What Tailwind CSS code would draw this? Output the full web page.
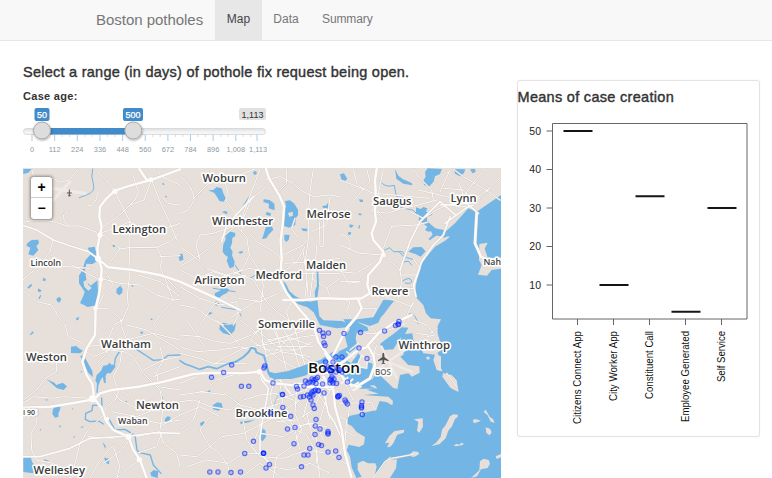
<!DOCTYPE html>
<html lang="en">
<head>
<meta charset="utf-8">
<title>Boston potholes</title>
<script src="https://cdn.jsdelivr.net/npm/@tailwindcss/browser@4"></script>
</head>
<body class="h-[478px] w-[772px] overflow-hidden bg-white font-['Liberation_Sans',Arial,sans-serif] text-[#333]">
<nav class="flex h-[41px] border-b border-[#e7e7e7] bg-[#f8f8f8] pl-24 text-[12px] leading-[39px] text-[#777]">
  <span class="w-[119px] whitespace-nowrap text-[15px] tracking-[-0.03px]">Boston potholes</span>
  <span class="w-[47px] bg-[#e7e7e7] text-center text-[#444]">Map</span>
  <span class="w-[48px] text-center">Data</span>
  <span class="ml-3 tracking-[-0.1px]">Summary</span>
</nav>
<main class="flex pl-[23px]">
  <section class="w-[478px]">
    <h4 class="mt-[23px] h-[16px] whitespace-nowrap text-[14.500px] leading-4 tracking-[0.25px] [-webkit-text-stroke:0.4px]">Select a range (in days) of pothole fix request being open.</h4>
    <p class="mt-[9px] h-[14px] text-[11px] font-bold leading-[14px] tracking-[0.3px]">Case age:</p>
    <svg class="block h-[65px] w-[260px]" viewBox="23 103 260 65" font-family="Liberation Sans, Arial, sans-serif">
      <defs>
        <linearGradient id="track" x2="0" y2="1"><stop stop-color="#dedede"/><stop offset=".6" stop-color="#f5f5f5"/></linearGradient>
        <filter id="knob" x="-50%" y="-50%" width="200%" height="200%"><feDropShadow dx=".5" dy="1" stdDeviation=".8" flood-opacity=".35"/></filter>
      </defs>
      <g id="ticks"></g>
      <rect x="23.5" y="128.500" width="242" height="6" rx="3" fill="url(#track)" stroke="#d0d0d0" stroke-width=".7"/>
      <rect x="42" y="128" width="91" height="6.500" fill="#428bca"/>
      <rect x="34.500" y="108" width="15" height="13" rx="2" fill="#428bca"/>
      <rect x="123" y="108" width="20" height="13" rx="2" fill="#428bca"/>
      <rect x="239" y="108" width="27" height="12" rx="2" fill="#e1e1e1"/>
      <g font-size="9" text-anchor="middle">
        <text x="42" y="117.500" fill="#fff" stroke="#fff" stroke-width=".25">50</text>
        <text x="133" y="117.500" fill="#fff" stroke="#fff" stroke-width=".25">500</text>
        <text x="252.500" y="117.500" fill="#333">1,113</text>
      </g>
      <g fill="#ddd" stroke="#aaa" filter="url(#knob)"><circle cx="42" cy="130.500" r="8.500"/><circle cx="133.300" cy="130.500" r="8.500"/></g>
    </svg>
    <div class="relative h-[310px] w-[478px] overflow-hidden">
      <svg class="block h-[310px] w-[478px]" viewBox="23 168 478 310">
        <rect x="23" y="168" width="478" height="310" fill="#e7dfd9"/>
        <g transform="translate(20 165) scale(.33333)" stroke-linejoin="round" stroke-linecap="round">
          <!-- lakes, ponds and rivers -->
          <g fill="#73b6e6">
            <path d="M22 235L35 225 55 224 57 235 49 244 55 255 40 272 25 268 31 248 19 242ZM10 12L35 12 25 23 10 27ZM203 248L224 245 230 270 238 284 218 297 199 296 195 315 200 350 212 362 232 346 235 390 232 420 203 426 180 414 190 393 194 380 177 355 177 332 187 315 196 286 212 268ZM290 371L301 362 308 372 306 385 297 391 289 383ZM109 401l10-6 5 8-6 10-7-4ZM70 338l8 4-2 6-8-1ZM22 367l12-11 2 6-10 9ZM278 240l7-1 1 6-7 1ZM55 370l10 7-5 5-7-3ZM168 460l10-5-3 10-6 1ZM55 400l6-10 3 1-5 12ZM427 54l5 1 1 5-5-1ZM434 94l7-2-2 6ZM335 358l5 1-1 7-4-2ZM393 460l5 2-2 4-4-2ZM475 272l12-7 2 16-10 7Z"/>
            <g transform="translate(480 0)">
              <path d="M85 76L100 75 110 66 125 70 130 85 137 100 131 110 118 108 110 94 103 84ZM315 108L330 106 343 116 354 134 354 151 347 160 346 180 327 188 310 182 305 168 316 151 309 134 318 124ZM251 103L269 105 283 116 284 136 266 130 267 116 250 111ZM260 141l13 4-2 8-14-4ZM257 187L275 183 280 194 267 208 259 220 246 222 252 205ZM147 199L165 203 166 213 157 219 156 235 151 248 158 260 156 271 164 290 161 306 149 310 140 287 144 276 134 269 128 260 130 237 137 224 136 212ZM313 209l16 1-3 15-8 6-5-8ZM104 385L120 377 125 367 147 372 142 383 128 390 117 399 106 396ZM105 411l10-3 3 10-8 4-7-3ZM83 444l8-3 7 4-12 5ZM0 266l9 7 1 11-10 4ZM175 261l12-3 2 5-9 3ZM219 20l10-1 1 8-8 3ZM427 123l13-2 2-6 4 1 2 14-17 1ZM363 190l19 1-1 8-12-1ZM126 141l9-3 8 3-3 7ZM120 477l11-4 17 5Z"/>
              <path d="M120 12L145 15 168 10 164 31 151 46 129 39 118 28ZM98 256l14-9 13 3 3 13-13 9-16-4ZM62 317l-2-7 10-6 6 4-6 12ZM238 340l8-12 10 2 2 20-10 14-9-6Z" transform="translate(0 465)"/>
              <path d="M180 305l45-5-18 7-25 5ZM82 213l9-2 0 7-7 1ZM267 170l9-2-3 6Z" transform="translate(0 465)"/>
            </g>
            <g transform="translate(960 0)">
              <path d="M0 28L12 25 22 42 14 48 5 45ZM165 12L175 32 188 42 215 54 217 61 190 56 169 41ZM251 45L257 35 255 22 263 10 306 12 300 27 285 34 281 50 267 65 252 60ZM342 12L376 13 372 24 360 34 345 26ZM390 13l15-2 2 10-10 4ZM228 127L242 132 250 126 262 130 258 141 280 140 275 150 261 155 261 169 286 190 315 196 333 205 315 218 290 211 269 226 260 216 267 202 255 195 262 185 236 165 238 151 228 143ZM220 247L245 246 257 259 242 275 226 267 205 260ZM132 404L163 407 155 416 145 429 132 447 117 462 128 420ZM57 103l12 1 0 7-9 0ZM55 145l10 1-1 5-8-1ZM29 178l12 3-6 7-7-2ZM24 202l9-1 0 7-8 3ZM57 180l3 1-1 10-4-2Z"/>
            </g>
            <g transform="translate(0 465)">
              <path d="M80 178L103 188 109 195 128 188 141 199 131 210 111 205ZM153 80l16-2 6 6 14 8-9 8-27-1ZM181 109l9-5 10 18 17 31 2 18-14-12-16-32ZM230 165L243 153 250 137 261 136 269 128 275 135 285 132 286 141 272 160 261 160 257 168 257 190 252 188 248 170 240 184 235 198 233 218 229 218 231 190 226 182ZM99 267l10-8 13 0-3 13-4 8 1 10-11 3-8-11ZM10 413l22-4 4 17 12 14-8 20-30-4ZM252 413l16 3-1 17-9-4ZM435 296l8-7 9 2-5 17-13-3ZM30 43l8-9 3 4-9 8ZM72 418l18 6-17-1ZM247 366l10 11-1 10ZM391 458l10-8 14 4-2 20-19-5ZM361 37l6-3 3 5-7 4ZM423 231l6-1 1 7-6 0ZM315 244l6-2-1 8Z"/>
              <path d="M75 240l8-3-2 5ZM60 326l4 3-3 3ZM118 315l6 4-5 4ZM181 321l11-2-6 5ZM159 353l6-7-2 8ZM181 155l6-3-3 6ZM156 266l5-2-4 6Z"/>
            </g>
            <path transform="translate(960 465)" d="M483-375L410-325 385-335 345-290 315-264 290-260 275-255 330-250 315-238 285-220 260-190 242-165 232-135 226-90 228-68 250-45 258-20 272-5 303-2 293 18 293 40 303 75 303 90 292 100 300 110 298 133 310 160 335 165 350 181 356 216 343 210 331 203 307 170 310 155 290 150 280 120 285 104 250 100 240 80 220 60 217 40 195 42 205 23 185 22 163 40 135 60 120 72 130 90 160 88 184 50 178 80 192 103 181 110 205 135 238 139 239 158 216 170 205 160 180 165 172 207 159 203 108 154 100 174 81 197 103 196 112 205 80 209 116 221 70 225 145 230 159 243 157 256 139 246 119 243 109 270 24 289 23 311 36 319 50 336 75 351 72 373 58 381 26 374 20 390 30 410 35 442 49 474 65 470 53 450 53 430 69 422 84 430 106 430 110 440 105 462 119 450 133 425 151 409 154 420 171 418 168 445 150 474 483 474Z"/>
          </g>
          <!-- streams -->
          <g fill="none" stroke="#73b6e6" stroke-width="5">
            <path d="M218 12Q212 35 220 57T200 90L178 98" stroke-width="3"/>
            <path transform="translate(480 465)" d="M305 206L290 235 270 285M248 324l6 30" stroke-width="2"/>
            <path transform="translate(0 465)" d="M300 92L286 115 284 130M350 88L380 108 400 121 427 119 444 106 480 105M245 234L246 255 218 256 216 272 197 280 196 298 210 305 236 303 250 312M269 300L284 329 315 328 345 346 351 390 358 398 391 405 400 435 423 460" stroke-width="4"/>
            <g transform="translate(960 0)" stroke-width="3"><path d="M119 48Q136 70 163 61L169 94 190 100 182 128 218 135 246 160M130 257L149 248 160 260 187 260 200 278 222 284M179 263L196 278 190 292 205 288 215 300M184 350Q210 333 214 346T196 354M200 450Q215 440 225 455T235 475"/></g>
            <path d="M645 300L665 330M690 340l30-18M605 427l50 8 8 18M580 370l65 10M670 122l18-28" stroke-width="3"/>
          </g>
          <g fill="#e7dfd9">
            <path d="M190 350l10-6 5 15 10 10-10 8-12-12ZM804 144l14-4 1 12-11 3ZM1219 201l14-2 5 10-12 13-10-6Z"/>
            <!-- harbor islands -->
            <path transform="translate(960 465)" d="M222 298L248 295 249 320 238 338 231 332 235 306ZM135 370L148 348 164 333 193 329 191 338 172 344 160 370 151 380 141 382 148 368ZM274 379L288 368 302 351 306 329 317 315 330 289 340 283 354 284 353 291 345 297 336 319 325 332 317 355 299 372ZM341 377l8-6 7 3 10-6 6 4-7 4-17 3ZM398 300l9-3 16 5-11 5-10 3ZM431 276l6-7 12 21 10 7 5 11-12-3-9-19ZM437 322l13 4 5 11-6 9-10-7ZM420 424L431 416 446 420 450 431 443 444 423 448 411 469 393 474 418 451ZM467 409l16-7 0 10-13 5ZM210 402l10-8 15 2 2 7-15 8-10-2ZM258 110l10 0 2 7-9 2ZM418-228L443-232 434-214 444-185 483-188 483-154 455-150 441-133 414-136 425-165 417-180Z"/>
            <path d="M1110 885l62-15" fill="none" stroke="#e7dfd9" stroke-width="2"/>
          </g>
          <defs>
            <g id="minor">
              <path d="M9 172L40 166 70 166 110 172 140 183 180 183 230 202M40 12Q30 40 60 44T100 40L120 52 150 44 173 12M143 142Q123 145 133 167L144 184M240 205L280 191 330 170 390 205 480 175M232 22L260 45 285 80 305 120 330 170 327 225 330 310M340 35L355 80 345 105 330 120M395 45L420 110 450 175 470 225M242 190L300 150 330 120 372 105 393 48M410 15L425 35 480 60M330 248L410 247 450 230 480 205M243 205L300 250 272 290 255 310M327 248L298 252M410 247L427 280 420 310 432 332M420 275L480 272M432 332L450 380 460 405 420 450 400 480M432 332L480 382M330 320L322 390 325 425 305 470M240 340L300 355 360 360 410 390 460 405 480 403M100 222L90 260 60 300 9 345M9 375L50 410 95 420 115 455 135 480M80 300L210 310 240 340M155 300L240 345M230 430L265 430 300 460 305 480M262 330L280 360 250 390 232 430M355 330L420 350 480 395M235 80Q230 110 215 120L202 122M480 120Q430 118 430 100"/>
              <g transform="translate(480 0)"><path d="M0 32Q40 60 42 105L25 135 0 145M42 100L80 60 110 45 165 35 225 12M130 35L142 75 140 110 170 150 175 190 200 215 208 270 190 310 160 330M240 12L215 80 190 145 187 170M255 70L215 100 190 160 185 200M258 45L300 35 340 55 360 75 400 95 450 90 480 95M320 12L320 55 290 85M400 12L390 80 385 150 385 220 375 300M450 95L440 180 395 200M0 245L50 280 80 310 140 330 210 310 300 330 360 325M60 285L48 240 60 210 100 205 160 185M165 185L110 230 60 270 0 305M210 205L230 230 280 260 300 275M300 275L370 240 380 225M355 220L335 190 345 160M375 245L350 290 310 320M360 325L480 325M315 295L400 290 480 280M0 315L50 340 100 320 160 340 200 330M160 320L220 345 260 410 290 440 330 470M300 340L240 400 180 440 150 460M175 400L240 410 295 385 320 365M210 270L240 320 250 360 240 440M0 365L60 400 120 420 170 410 175 450 160 480M60 480L100 420 140 395M0 420L50 430 90 460 130 480M340 400L320 440 330 480M370 260L380 335 385 405M410 240L405 320M400 315L390 400M480 340L440 370 395 340M440 370L455 405M418 170L420 245 430 245 430 165M380 350L375 400"/></g>
              <g transform="translate(960 0)"><path d="M0 45L40 60 70 72 100 85 160 90 270 100M68 72L90 50 80 12M40 12L50 55 70 72M70 72L30 120 0 160M95 140L110 110 130 12M110 140L140 145 190 130 235 120 290 105M110 140L155 184 230 180 262 172M155 184L130 250M0 240L60 265 130 270M0 210Q20 205 30 230L30 255M0 320L50 325 90 300 130 270M0 350L60 350 90 380M90 320L60 350 25 355 0 310M210 140L250 160 290 135 320 120 380 125M220 12L240 40 275 75 280 105M235 75L320 95 360 110M310 70L370 75 390 95 420 100 450 70M290 50L320 20 355 50 370 90M340 12L370 35 430 70 480 105M300 80L330 15M370 95L410 40 440 12M395 110L440 75 480 40M140 280L180 315 185 350 175 400M180 370L220 370 240 310 220 280M185 330L230 330M100 385L150 400 215 425 220 415M60 430L110 430 90 465M0 400L30 410 20 440 40 470M220 410L190 475"/></g>
              <g transform="translate(0 465)"><path d="M9 120L95 130 145 125M135 15L145 50 180 65 200 80 280 70M110 130L110 155 75 175 50 210 10 240M9 250L40 230 100 235 130 230 210 235M52 265L50 310 33 340 35 390 50 420 100 430 150 474M160 450L180 370 205 330 245 290M205 350L280 355M280 20L260 70 260 100 230 130M280 15L310 0M200 95L220 110 270 90 310 95M305 20L320 60 400 40 480 60M320 15L380 30 430 60 480 90M305 95L300 130 280 170 290 200 340 240 360 270M310 95L340 110 370 160 420 210 430 260 420 330M360 270L300 240 275 210M370 150L430 120 480 110M400 170L480 140M420 80L430 120 410 155 415 200 480 210M275 275L350 290 400 270M245 290L260 260 285 240 300 205M325 350L370 300 420 310 480 300M350 350L420 335 430 370 470 400 480 440M330 355L310 385 280 410 250 430M280 380L300 440 290 474M280 375L240 420 210 474M360 420L330 440 290 474M350 400L410 380 425 340M150 474L185 455M420 320L480 285"/></g>
              <g transform="translate(480 465)"><path d="M0 45L60 50 110 65 150 70 215 45 250 20M0 80L50 95 120 90 180 80 210 90M0 100L60 115 100 130 200 130M0 190L50 170 90 140 140 110 190 85 215 80M0 225L70 215 110 180 160 165 240 150M60 215L140 225 180 255 240 270 300 250M0 245L40 240 90 260 150 270 190 240 240 225 290 220M60 240L40 300 0 330M20 0L60 60 75 80M110 0L150 40 180 75M180 0L220 30 250 70 260 110M240 0L250 80 300 120 350 145M270 0L290 50 350 100 400 130M230 30L290 80 400 80M210 80L280 70 370 50 410 45M250 70L380 30 400 0M300 10L340 80 360 145M340 10L370 120 380 150M250 110L300 95 390 110M285 20L320 150M260 60L320 50 390 75M280 100L350 30M235 30L210 60 260 90 350 90 400 65M0 285L60 260 120 290M90 290L60 330 90 380 120 400 145 440 150 474M90 380L50 410 0 405M90 380L125 350 190 340 240 315 285 290M190 305L200 360 230 400M240 260L240 320 215 380 240 410M280 190L270 230 285 285 330 320 380 345 410 400 420 474M300 190L310 260 345 330 360 390M380 210L360 240 300 280M285 220L340 240 380 280 400 360M290 240L350 220 400 200M320 210L400 290 430 360 470 400M350 205L345 280 365 330 335 380 290 410 280 474M390 215L370 290 410 340 410 430M430 200L400 270 350 300 290 305M240 340L310 350 380 310 440 320M240 410L310 415 380 390 440 400 480 420M340 320L400 310 450 345M270 440L330 450 390 430 450 460M20 440L80 420 145 430 190 400 240 400M180 474L240 430 310 474M410 215L440 260 450 300M460 190L440 230 420 300M400 160L480 220M420 130L440 200M450 120L455 200M395 185L480 170"/></g>
            </g>
            <g id="local">
              <path transform="translate(960 465)" d="M30 0L80 40 110 40M90 60L110 75 95 120M100 100L120 104M80 0L110 40M120 40L200 10M220 0L260 15 280 40M230 40L265 45 290 25M260 50L285 45M300 110L300 150M20 200L40 240M0 250L95 248 105 270M30 245L25 290M65 245L65 285M0 290L20 300 15 370 0 400M0 350L20 335 45 350M0 420L30 440M100 474L135 425 155 415 220 403M320 160L350 200"/>
            </g>
            <g id="major">
              <path d="M0 178L50 195 100 225 150 242 205 260 230 278M240 210L230 280M700 95L620 180 605 230"/>
              <path transform="translate(960 0)" d="M345 148L300 110 240 170 210 230 180 315M300 120L380 115 415 145M315 175L380 128 400 120M330 155L310 210 280 240 245 290 220 360 228 395"/>
              <path transform="translate(0 465)" d="M9 410L60 410 150 385 210 355 330 348 410 338 480 340"/>
              <path transform="translate(480 465)" d="M240 150L245 180 265 205 260 240 250 285 240 350 240 400 270 430M300 180L330 220M430 210L445 280 465 310 480 345M340 190L410 190 450 210"/>
            </g>
            <g id="highway">
              <path d="M358 12L380 45 398 43 480 13M393 45L330 62 285 77 260 100 240 125 238 155 245 185 240 210 232 250 235 280 245 310 243 345 237 390 227 430 225 510 200 550 187 590 200 630 217 657 222 698M233 280L265 307 340 315 420 330 480 350 600 405 660 435"/>
              <path transform="translate(480 0)" d="M258 12L267 40 300 95 312 125 308 180 302 225 305 280 300 345 320 385 360 435 400 480 415 530 455 585"/>
              <path transform="translate(960 0)" d="M110 12L105 45 107 80 105 140 108 170 95 205 100 225 130 260 120 290 85 330 82 360 90 385 55 405 65 430 50 455 20 490 0 530 -20 570M-170 405L-110 405 -50 400 20 402 65 400M410 145L405 235 423 275 450 290"/>
              <path transform="translate(0 465)" d="M9 263L90 260 165 248 222 238 240 220 275 210 355 200 430 185 520 162 570 158 670 160 720 155 735 180 760 190 860 200 940 200M222 235L245 265 260 305 280 330 325 350 340 390 360 420 380 474"/>
              <path transform="translate(960 465)" d="M-45 100L-25 130 0 160 20 190 50 200 90 175 105 135 100 105 85 80 55 90 10 125 -20 145M80 80L115 40 160 10 215-15M-50 170L-20 210 -15 260 5 330 15 400 35 474"/>
            </g>
          </defs>
          <g fill="none">
            <path d="M100 105L150 50M95 70L195 85" stroke="#eeeae5" stroke-width="10"/>
            <g stroke="#d2cac4"><use href="#minor" stroke-width="5"/><use href="#local" stroke-width="5"/><use href="#major" stroke-width="7"/></g>
            <g stroke="#fcfbfa"><use href="#minor" stroke-width="3"/><use href="#local" stroke-width="3"/><use href="#major" stroke-width="5"/></g>
          </g>
          <!-- mystic river, charles basin and inner harbor -->
          <g fill="#73b6e6">
            <path transform="translate(480 0)" d="M310 348L318 356 328 378 345 393 368 404 390 410 406 407 404 380 411 362 410 320 415 320 417 362 412 400 415 430 418 453 430 466 485 468 510 476 510 486 470 490 420 480 401 442 382 427 355 418 337 402 318 375Z"/>
            <path transform="translate(705 435)" d="M265 28L290 28 338 52 340 62 305 68 302 85 306 105 300 116 280 132 274 150 288 160 310 130 330 155 352 160 356 190 345 228 365 236 310 236 282 212 258 190 246 165 240 140 252 124 278 111 270 80 285 56ZM35 183L60 190 100 183 150 165 196 150 236 124 246 133 230 150 195 172 150 197 110 207 60 207 44 200ZM290 30L355 22 385-30 407-28 380 15 370 38 345 48Z"/>
            <g fill="none" stroke="#73b6e6"><path d="M480 587L495 597 515 604 538 613 565 605 590 611 622 597 648 590" stroke-width="5"/><path d="M648 590L670 576 686 561 693 548 706 552 709 562 732 572 739 598 747 628 765 642" stroke-width="6"/></g>
          </g>
          <path d="M1025 570L1042 591 1040 610 1010 604ZM980 560L1001 577M990 555L1015 535" fill="#e7dfd9" stroke="#f7f4f1" stroke-width="4"/>
          <g fill="none"><use href="#highway" stroke="#d7d0ca" stroke-width="9.500"/><use href="#highway" stroke="#fdfcfb" stroke-width="7.500"/></g>
          <g fill="#fdfcfb"><circle cx="285" cy="79" r="8"/><circle cx="240" cy="210" r="8"/><circle cx="234" cy="281" r="9"/><circle cx="243" cy="343" r="7"/><circle cx="227" cy="430" r="7"/><circle cx="218" cy="701" r="11"/><circle cx="260" cy="763" r="7"/><circle cx="325" cy="815" r="9"/><circle cx="358" cy="884" r="8"/><circle cx="718" cy="620" r="8"/><circle cx="1090" cy="270" r="7"/><circle cx="393" cy="44" r="7"/></g>
          <path d="M885 655L950 640M890 675L935 645M965 655l18-17M980 660l18-17M995 665l20-12M1000 675l23-10" stroke="#f7f4f1" stroke-width="6"/>
          <path transform="translate(960 465)" d="M125 80L170 175M115 145L210 80M130 120L215 155" stroke="#f0ebe7" stroke-width="7"/>
          <path d="M148 75v18m-6-9h12m-8 8h5" fill="none" stroke="#555" stroke-width="3"/>
          <path transform="translate(1090 580)" d="M0-17Q3-17 3-10V-4L16 6V9L3 5 2 13 6 16V18L0 16-6 18V16L-2 13-3 5-16 9V6L-3-4V-10Q-3-17 0-17Z" fill="#555"/>
          <path d="M9 730H54V753H9Z" fill="#fff" stroke="#bbb" stroke-width="2"/>
        </g>
        <g id="labels" font-family="Open Sans, Noto Sans, sans-serif" font-weight="600" stroke="#fff" stroke-width="3.200" stroke-linejoin="round" paint-order="stroke"></g>
        <g id="cases" fill="#0033ff" fill-opacity=".2" stroke="#0022ff" stroke-opacity=".58" stroke-width="1.100"></g>
      </svg>
      <div class="absolute left-2 top-[9px] h-[42px] w-[21px] rounded-[3px] bg-white text-center text-[14px] font-bold leading-5 text-black shadow-[0_0_3px_1px_rgba(0,0,0,0.4)]">
        <div class="h-[21px] border-b border-[#ccc]">+</div>
        <div class="h-[21px]">−</div>
      </div>
    </div>
  </section>
  <aside class="ml-[15.500px] mt-[38.500px] h-[357px] w-[243px] rounded-[3px] border border-[#e3e3e3] shadow-[0_0_1px_#ddd]">
    <h4 class="mt-[8px] h-4 whitespace-nowrap text-[14.500px] leading-4 tracking-[0.3px] [-webkit-text-stroke:0.4px]">Means of case creation</h4>
    <svg class="mt-px block h-[325px] w-[241px]" viewBox="518 106 241 325" font-family="Liberation Sans, Arial, sans-serif" font-size="10.500" fill="#222">
      <path d="M552.500 123.500H747V319H552.500ZM546.500 131h6M546.500 169.500h6M546.500 208h6M546.500 246.500h6M546.500 285h6M577.500 319v6M613.500 319v6M649.500 319v6M685.500 319v6M721.500 319v6" fill="none" stroke="#555" stroke-width=".9"/>
      <path d="M563.500 131h29M599.500 285h29M635.500 196.300h29M671.500 311.800h29M707.500 208h29" stroke="#151515" stroke-width="1.900"/>
      <g text-anchor="end"><text x="541" y="134.800">50</text><text x="541" y="173.300">40</text><text x="541" y="211.800">30</text><text x="541" y="250.300">20</text><text x="541" y="288.800">10</text></g>
      <g id="categories" fill="#111" font-size="10"></g>
    </svg>
  </aside>
</main>
<script>
const NS = 'http://www.w3.org/2000/svg';
function add(parent, tag, attrs, text) {
  const el = document.createElementNS(NS, tag);
  for (const k in attrs) el.setAttribute(k, attrs[k]);
  if (text) el.textContent = text;
  document.getElementById(parent).appendChild(el);
}
// slider scale
[0,112,224,336,448,560,672,784,896,1008,1113].forEach((v, i) => {
  const x = 32 + v * 0.2022;
  add('ticks', 'path', {d: `M${x} 134v7`, stroke: '#a9cdea', 'stroke-width': 1});
  add('ticks', 'text', {x: x + (i === 10 ? 1 : 0), y: 152, 'text-anchor': 'middle', 'font-size': 7.4, fill: '#8b9ba5'}, v.toLocaleString('en-US'));
  if (i < 10) [1, 2].forEach(n => add('ticks', 'path', {d: `M${x + n * 7.5} 134v3`, stroke: '#d2d2d2', 'stroke-width': .8}));
});
// name, left, baseline, width, font size
[['Woburn',202.5,182,43.5,11.3],['Saugus',373,205,38.5,11.3],['Lynn',450.5,202,26,11.3],['Winchester',212,225,61,11.3],['Melrose',306.5,218,44,11.3],['Lexington',112.5,233,53.5,11.3],
['Lincoln',30.5,266,30.5,8.5],['Nah',483.5,265,17.5,8.5],['Malden',306,268.5,40,11.3],['Medford',255.5,279,46.5,11.3],['Arlington',194.5,284,50,11.3],['Revere',371.5,294.5,37,11.3],['Somerville',258,328,57,11.3],
['Winthrop',398.5,348.5,51.5,11.3],['Waltham',101,347.5,50,11.3],['Weston',26,361,41,11.3],['Boston',308,372.5,52,15],['BOS',375,374.5,16,8],['Newton',136,408.5,43,11.3],['Waban',118,424,29.5,8.5],['Brookline',235.5,417,52,11.3],['Wellesley',33.5,473.5,51.5,11.3],['I 90',23,415,12,7.5]]
.forEach(([t, x, y, w, s]) => add('labels', 'text', {x, y, textLength: w, lengthAdjust: 'spacingAndGlyphs', 'font-size': s, fill: t === 'Boston' ? '#111' : t === 'BOS' ? '#666' : '#3c3c3c'}, t));
// open cases: x, y
[[211.5,377.3],[223.6,372.4],[231.7,365],[241.4,386.3],[248.8,386.3],[264,368],[264.8,366],[273,383],[282.5,394.6],[282.5,394.6],[282.8,407.5],[270.5,413],[290.7,416.3],[287.5,429],[295,427.5],[253.5,441.3],[244.7,453.4],[263.5,453.3],[263.5,453.3],[263.5,453.3],[269.5,464.6],[266,468],[209.8,472],[218,472],[231,472.6],[240.5,472],[301.5,466.8],[294,443.7],[304,455],[308,455],[309.7,448.5],[318.5,444.5],[321.5,445.6],[328,431.5],[328,434],[328,433],[320,429],[315.3,426],[316,419.5],[315,434.5],[314.3,408.4],[313,405],[311,400],[307.5,395],[303.5,396.5],[300.5,397],[309.5,397],[312,392],[314,391],[315.5,390],[318,391],[318.5,390.5],[311,394],[313,395],[324,393],[297.5,389],[296.5,386.5],[304,386],[305.5,381],[308,383],[310,382],[313,382],[314,380],[316,379],[317.5,377.5],[316,383.5],[312,379],[322.6,384],[330,383],[332,381],[334,379],[331,379],[333,383],[336.5,383.5],[330,380],[332,377],[328,452],[335.7,451],[339,457.5],[319.5,330.3],[323,333],[323.5,336.5],[328.5,333],[324,343],[325,345.5],[325.5,362],[333,362],[336,357],[342,357],[326,369],[328,367],[330,370],[333,368],[336,372],[331,372],[340,370],[342,372],[338,369],[347.5,382],[344,333.5],[360.5,332.5],[359,348],[367,358.5],[384.6,331],[395.5,325.5],[398,324],[399,321.5],[398.5,324.5],[338,396.5],[338,397],[338,396],[339.5,395.5],[345,400],[346,402],[347.5,404],[362,402],[361.5,405.5],[361.5,408],[361.5,407],[362.3,414.5]]
.forEach(([cx, cy]) => add('cases', 'circle', {cx, cy, r: 2.2}));
['Citizens Connect App','City Worker App','Constituent Call','Employee Generated','Self Service'].forEach((t, i) =>
  add('categories', 'text', {transform: `translate(${581 + i * 36} 331) rotate(-90)`, 'text-anchor': 'end', textLength: [93,70,68,91,51][i], lengthAdjust: 'spacingAndGlyphs'}, t));
</script>
</body>
</html>
